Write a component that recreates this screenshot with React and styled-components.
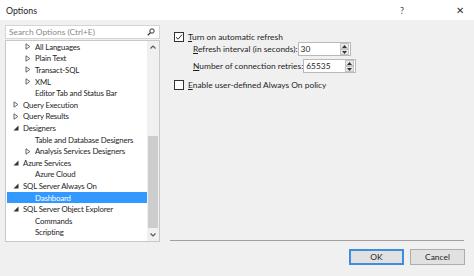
import React from "react";
import styled, { createGlobalStyle } from "styled-components";

const GlobalStyle = createGlobalStyle`
  html, body { margin: 0; padding: 0; background: #f0f0f0; }
  body { font-family: Lato, "Noto Sans", sans-serif; font-size: 8.4px; color: #1e1e1e; }
  * { box-sizing: border-box; }
`;

const treeItems = [
  { label: "All Languages", level: 1, arrow: "closed" },
  { label: "Plain Text", level: 1, arrow: "closed" },
  { label: "Transact-SQL", level: 1, arrow: "closed" },
  { label: "XML", level: 1, arrow: "closed" },
  { label: "Editor Tab and Status Bar", level: 1 },
  { label: "Query Execution", level: 0, arrow: "closed" },
  { label: "Query Results", level: 0, arrow: "closed" },
  { label: "Designers", level: 0, arrow: "open" },
  { label: "Table and Database Designers", level: 1 },
  { label: "Analysis Services Designers", level: 1, arrow: "closed" },
  { label: "Azure Services", level: 0, arrow: "open" },
  { label: "Azure Cloud", level: 1 },
  { label: "SQL Server Always On", level: 0, arrow: "open" },
  { label: "Dashboard", level: 1, selected: true },
  { label: "SQL Server Object Explorer", level: 0, arrow: "open" },
  { label: "Commands", level: 1 },
  { label: "Scripting", level: 1 },
];

const Arrow = ({ type }) =>
  type === "open" ? (
    <svg width="6" height="6" viewBox="0 0 6 6">
      <path d="M5.5 0.5 L5.5 5.5 L0.5 5.5 Z" fill="#333" />
    </svg>
  ) : (
    <svg width="6" height="7" viewBox="0 0 6 7">
      <path d="M1 0.8 L4.8 3.5 L1 6.2 Z" fill="none" stroke="#555" strokeWidth="0.9" />
    </svg>
  );

const Check = ({ checked }) => (
  <CheckBox>
    {checked && (
      <svg width="8" height="8" viewBox="0 0 8 8">
        <path d="M1 4.2 L3.1 6.2 L7 1.6" fill="none" stroke="#333" strokeWidth="1" />
      </svg>
    )}
  </CheckBox>
);

const Spinner = ({ value }) => (
  <SpinInput>
    <span>{value}</span>
    <SpinButtons>
      <SpinHalf>
        <svg width="5" height="3" viewBox="0 0 5 3"><path d="M0 3 L2.5 0 L5 3 Z" fill="#333" /></svg>
      </SpinHalf>
      <SpinHalf>
        <svg width="5" height="3" viewBox="0 0 5 3"><path d="M0 0 L2.5 3 L5 0 Z" fill="#333" /></svg>
      </SpinHalf>
    </SpinButtons>
  </SpinInput>
);

const App = () => {
  return (
    <Window>
      <GlobalStyle />
      <TitleBar>
        <span>Options</span>
        <TitleButtons>
          <span>?</span>
          <CloseX>✕</CloseX>
        </TitleButtons>
      </TitleBar>
      <Main>
        <LeftColumn>
          <SearchBox>
            <span>Search Options (Ctrl+E)</span>
            <svg width="8" height="8" viewBox="0 0 8 8">
              <circle cx="5" cy="3" r="2.2" fill="none" stroke="#333" strokeWidth="1" />
              <path d="M3.4 4.6 L0.8 7.2" stroke="#333" strokeWidth="1.3" />
            </svg>
          </SearchBox>
          <TreeBox>
            <TreeList>
              {treeItems.map((item, index) => (
                <TreeRow key={index} $level={item.level} $selected={item.selected}>
                  <ArrowSlot>{item.arrow && <Arrow type={item.arrow} />}</ArrowSlot>
                  <span>{item.label}</span>
                </TreeRow>
              ))}
            </TreeList>
            <ScrollBar>
              <ScrollArrow>
                <svg width="6" height="4" viewBox="0 0 6 4"><path d="M0.5 3.5 L3 1 L5.5 3.5" fill="none" stroke="#555" strokeWidth="1.1" /></svg>
              </ScrollArrow>
              <ScrollTrack>
                <ScrollThumb />
              </ScrollTrack>
              <ScrollArrow>
                <svg width="6" height="4" viewBox="0 0 6 4"><path d="M0.5 0.5 L3 3 L5.5 0.5" fill="none" stroke="#555" strokeWidth="1.1" /></svg>
              </ScrollArrow>
            </ScrollBar>
          </TreeBox>
        </LeftColumn>
        <RightColumn>
          <OptionsArea>
            <CheckRow>
              <Check checked />
              <span><u>T</u>urn on automatic refresh</span>
            </CheckRow>
            <FieldRow>
              <FieldLabel><u>R</u>efresh interval (in seconds):</FieldLabel>
              <Spinner value="30" />
            </FieldRow>
            <FieldRow $spaced>
              <FieldLabel><u>N</u>umber of connection retries:</FieldLabel>
              <Spinner value="65535" />
            </FieldRow>
            <CheckRow $gap>
              <Check />
              <span><u>E</u>nable user-defined Always On policy</span>
            </CheckRow>
          </OptionsArea>
          <Separator />
        </RightColumn>
      </Main>
      <Footer>
        <Button $default>OK</Button>
        <Button>Cancel</Button>
      </Footer>
    </Window>
  );
};

const Window = styled.div`
  width: 474px;
  height: 276px;
  display: flex;
  flex-direction: column;
  background: #f0f0f0;
  overflow: hidden;
`;

const TitleBar = styled.div`
  height: 20px;
  background: #ffffff;
  display: flex;
  align-items: center;
  justify-content: space-between;
  padding: 0 10px 0 6px;
  font-size: 8.8px;
  color: #222;
`;

const TitleButtons = styled.div`
  display: flex;
  align-items: center;
  gap: 52px;
  font-size: 9px;
  color: #444;
`;

const CloseX = styled.span`
  font-size: 10px;
  color: #333;
`;

const Main = styled.div`
  display: flex;
  height: 223px;
`;

const LeftColumn = styled.div`
  width: 160px;
  padding: 5px 0 0 5px;
  display: flex;
  flex-direction: column;
  gap: 1px;
`;

const SearchBox = styled.div`
  height: 14px;
  background: #fff;
  border: 1px solid #d5d5d5;
  display: flex;
  align-items: center;
  justify-content: space-between;
  padding: 0 4px 0 3px;
  color: #8a8a8a;
`;

const TreeBox = styled.div`
  height: 202px;
  background: #fff;
  border: 1px solid #c8c8c8;
  display: flex;
`;

const TreeList = styled.div`
  flex: 1;
  padding: 0 0 0 1px;
  display: flex;
  flex-direction: column;
`;

const TreeRow = styled.div`
  height: 11.6px;
  display: flex;
  align-items: center;
  padding-left: ${(p) => (p.$level === 0 ? 6 : 18)}px;
  background: ${(p) => (p.$selected ? "#3399ff" : "transparent")};
  color: ${(p) => (p.$selected ? "#ffffff" : "#1e1e1e")};
  font-size: 7.8px;
  letter-spacing: -0.15px;
  white-space: nowrap;
`;

const ArrowSlot = styled.span`
  width: 10px;
  display: flex;
  align-items: center;
  flex-shrink: 0;
`;

const ScrollBar = styled.div`
  width: 12px;
  background: #f0f0f0;
  display: flex;
  flex-direction: column;
`;

const ScrollArrow = styled.div`
  height: 12px;
  display: flex;
  align-items: center;
  justify-content: center;
`;

const ScrollTrack = styled.div`
  flex: 1;
  display: flex;
  flex-direction: column;
  justify-content: flex-end;
  padding: 0 1px 1px;
`;

const ScrollThumb = styled.div`
  height: 92px;
  background: #cdcdcd;
`;

const RightColumn = styled.div`
  flex: 1;
  display: flex;
  flex-direction: column;
  padding: 0 10px 0 10px;
`;

const OptionsArea = styled.div`
  flex: 1;
  padding: 11px 0 0 4px;
  display: flex;
  flex-direction: column;
`;

const CheckRow = styled.div`
  display: flex;
  align-items: center;
  gap: 4px;
  height: 11px;
  margin-top: ${(p) => (p.$gap ? "6px" : "0")};
  color: #1e1e1e;
  white-space: nowrap;
`;

const CheckBox = styled.span`
  width: 10px;
  height: 10px;
  border: 1px solid #333;
  background: #fff;
  display: flex;
  align-items: center;
  justify-content: center;
`;

const FieldRow = styled.div`
  display: flex;
  align-items: center;
  justify-content: space-between;
  padding-left: 19px;
  width: 176px;
  margin-top: ${(p) => (p.$spaced ? "3px" : "0")};
  height: 14px;
`;

const FieldLabel = styled.span`
  color: #1e1e1e;
  white-space: nowrap;
`;

const SpinInput = styled.div`
  width: 53px;
  height: 14px;
  flex-shrink: 0;
  background: #fff;
  border: 1px solid #b9b9b9;
  display: flex;
  align-items: center;
  justify-content: space-between;
  padding-left: 2px;
`;

const SpinButtons = styled.div`
  width: 9px;
  height: 12px;
  display: flex;
  flex-direction: column;
  margin-right: 1px;
`;

const SpinHalf = styled.div`
  flex: 1;
  background: #e8e8e8;
  border: 1px solid #c4c4c4;
  display: flex;
  align-items: center;
  justify-content: center;
`;

const Separator = styled.div`
  height: 1px;
  background: #a0a0a0;
  margin-bottom: 2px;
`;

const Footer = styled.div`
  flex: 1;
  display: flex;
  justify-content: flex-end;
  align-items: flex-start;
  gap: 6px;
  padding: 6px 9px 0 0;
`;

const Button = styled.div`
  width: 55px;
  height: 16px;
  background: #e1e1e1;
  border: 1px solid ${(p) => (p.$default ? "#3c8fe0" : "#adadad")};
  box-shadow: ${(p) => (p.$default ? "inset 0 0 0 1px #3c8fe0" : "none")};
  display: flex;
  align-items: center;
  justify-content: center;
  color: #1e1e1e;
`;

export default App;
